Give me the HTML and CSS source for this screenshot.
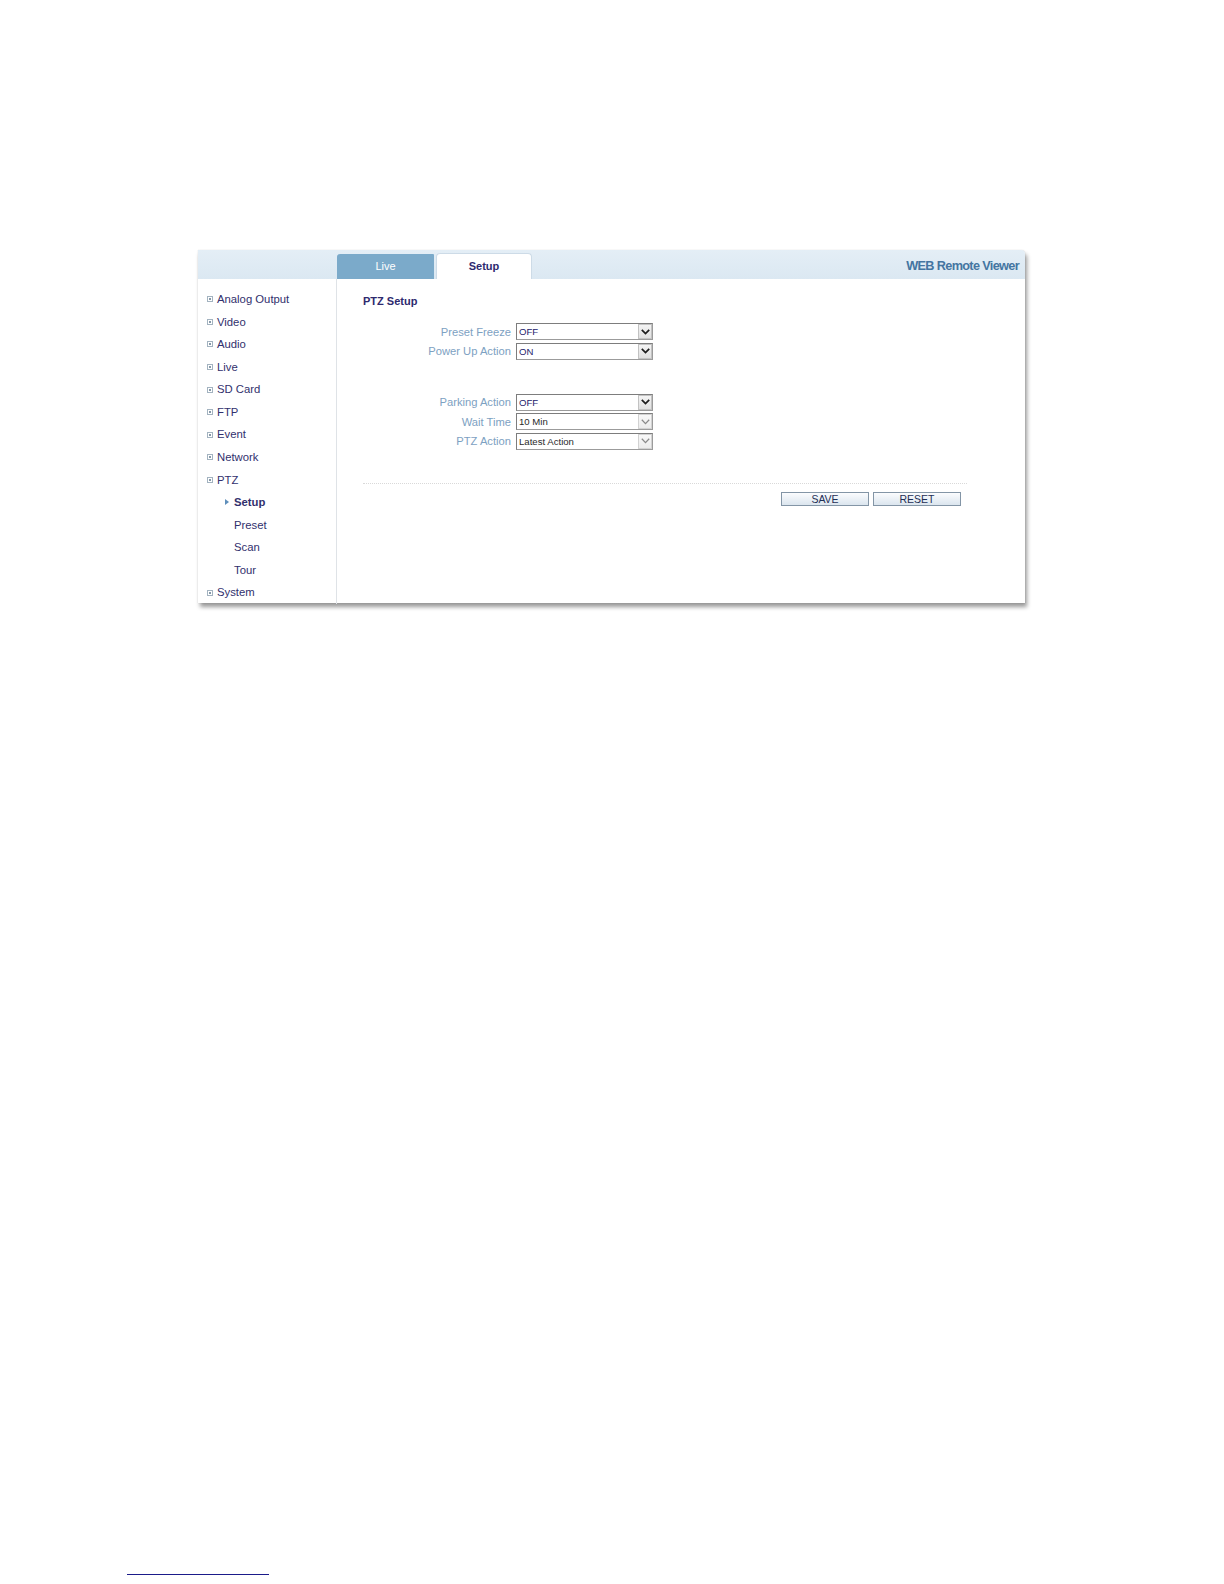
FILE: index.html
```html
<!DOCTYPE html>
<html lang="en">
<head>
<meta charset="utf-8">
<title>WEB Remote Viewer - PTZ Setup</title>
<link rel="stylesheet" href="styles.css">
</head>
<body>
<div class="page">
  <div class="frame">
    <div class="header">
      <div class="header-left"></div>
      <div class="tab tab-live">Live</div>
      <div class="tab tab-setup">Setup</div>
      <div class="brand">WEB Remote Viewer</div>
    </div>
    <div class="body">
      <ul class="sidebar">
        <li class="nav-item"><span class="box"></span>Analog Output</li>
        <li class="nav-item"><span class="box"></span>Video</li>
        <li class="nav-item"><span class="box"></span>Audio</li>
        <li class="nav-item"><span class="box"></span>Live</li>
        <li class="nav-item"><span class="box"></span>SD Card</li>
        <li class="nav-item"><span class="box"></span>FTP</li>
        <li class="nav-item"><span class="box"></span>Event</li>
        <li class="nav-item"><span class="box"></span>Network</li>
        <li class="nav-item"><span class="box"></span>PTZ</li>
        <li class="nav-sub active"><span class="tri"></span>Setup</li>
        <li class="nav-sub">Preset</li>
        <li class="nav-sub">Scan</li>
        <li class="nav-sub">Tour</li>
        <li class="nav-item"><span class="box"></span>System</li>
      </ul>
      <div class="content">
        <div class="title">PTZ Setup</div>
        <div class="form">
          <div class="group">
            <div class="row">
              <span class="label">Preset Freeze</span>
              <div class="select"><span class="value">OFF</span><span class="arrow"><svg width="9" height="6" viewBox="0 0 9 6"><path d="M0.8 0.8 L4.5 4.6 L8.2 0.8" fill="none" stroke="#1c1c1c" stroke-width="1.7"/></svg></span></div>
            </div>
            <div class="row">
              <span class="label">Power Up Action</span>
              <div class="select"><span class="value">ON</span><span class="arrow"><svg width="9" height="6" viewBox="0 0 9 6"><path d="M0.8 0.8 L4.5 4.6 L8.2 0.8" fill="none" stroke="#1c1c1c" stroke-width="1.7"/></svg></span></div>
            </div>
          </div>
          <div class="group group-2">
            <div class="row">
              <span class="label">Parking Action</span>
              <div class="select"><span class="value">OFF</span><span class="arrow"><svg width="9" height="6" viewBox="0 0 9 6"><path d="M0.8 0.8 L4.5 4.6 L8.2 0.8" fill="none" stroke="#1c1c1c" stroke-width="1.7"/></svg></span></div>
            </div>
            <div class="row">
              <span class="label">Wait Time</span>
              <div class="select disabled"><span class="value">10 Min</span><span class="arrow"><svg width="9" height="6" viewBox="0 0 9 6"><path d="M0.8 0.8 L4.5 4.6 L8.2 0.8" fill="none" stroke="#8a8a8a" stroke-width="1.3"/></svg></span></div>
            </div>
            <div class="row">
              <span class="label">PTZ Action</span>
              <div class="select disabled"><span class="value">Latest Action</span><span class="arrow"><svg width="9" height="6" viewBox="0 0 9 6"><path d="M0.8 0.8 L4.5 4.6 L8.2 0.8" fill="none" stroke="#8a8a8a" stroke-width="1.3"/></svg></span></div>
            </div>
          </div>
          <div class="divider"></div>
          <div class="buttons">
            <button class="btn">SAVE</button>
            <button class="btn">RESET</button>
          </div>
        </div>
      </div>
    </div>
  </div>
  <div class="foot-rule"></div>
</div>
</body>
</html>
```
FILE: styles.css
```css
html, body {
  margin: 0;
  padding: 0;
  background: #ffffff;
}

body {
  font-family: "Liberation Sans", Arial, sans-serif;
}

.page {
  display: flex;
  flex-direction: column;
  padding-top: 250px;
  padding-left: 198px;
}

.frame {
  width: 827px;
  height: 353px;
  display: flex;
  flex-direction: column;
  background: #ffffff;
  border-top-right-radius: 4px;
  box-shadow: 0 0 1px rgba(0, 0, 0, 0.25), 2px 4px 4px rgba(0, 0, 0, 0.4);
}

.header {
  height: 29px;
  flex: none;
  display: flex;
  align-items: flex-end;
  background: linear-gradient(#e4eef6, #dbe8f2);
  border-top-right-radius: 4px;
}

.header-left {
  width: 139px;
}

.tab {
  height: 25px;
  line-height: 25px;
  text-align: center;
  font-size: 11px;
  box-sizing: border-box;
}

.tab-live {
  width: 97px;
  background: #7baaca;
  color: #ffffff;
  border-top-left-radius: 3px;
  border-top-right-radius: 1px;
}

.tab-setup {
  width: 96px;
  height: 26px;
  line-height: 25px;
  margin-left: 2px;
  background: #ffffff;
  color: #2e2a6e;
  font-weight: bold;
  border: 1px solid #cddbe7;
  border-bottom: none;
  border-top-left-radius: 4px;
  border-top-right-radius: 4px;
}

.brand {
  margin-left: auto;
  padding-right: 6px;
  padding-bottom: 6px;
  font-size: 12.7px;
  font-weight: bold;
  letter-spacing: -0.65px;
  color: #4475a1;
}

.body {
  flex: 1;
  display: flex;
}

.sidebar {
  list-style: none;
  margin: 0;
  padding: 9px 0 0 0;
  width: 138px;
  border-right: 1px solid #dfe3e7;
  flex: none;
}

.nav-item,
.nav-sub {
  height: 22.57px;
  line-height: 22.57px;
  font-size: 11.3px;
  color: #31306d;
  display: flex;
  align-items: center;
  white-space: nowrap;
}

.nav-item {
  padding-left: 9px;
}

.box {
  width: 4px;
  height: 4px;
  border: 1px solid #a3b3c0;
  margin-right: 4px;
  display: flex;
  align-items: center;
  justify-content: center;
}

.box::after {
  content: "";
  width: 2px;
  height: 2px;
  background: #8699a8;
}

.nav-sub {
  padding-left: 36px;
}

.nav-sub.active {
  padding-left: 27px;
  font-weight: bold;
}

.tri {
  width: 0;
  height: 0;
  border-top: 3px solid transparent;
  border-bottom: 3px solid transparent;
  border-left: 4px solid #5f8fbb;
  margin-right: 5px;
}

.content {
  flex: 1;
  padding-left: 26px;
}

.title {
  margin-top: 15px;
  height: 14px;
  line-height: 14px;
  font-size: 11px;
  font-weight: bold;
  color: #2e2a6e;
}

.form {
  width: 604px;
  margin-top: 15px;
}

.group {
  display: flex;
  flex-direction: column;
  gap: 2.5px;
}

.group-2 {
  margin-top: 34px;
}

.row {
  display: flex;
  align-items: center;
  height: 17px;
}

.label {
  width: 148px;
  text-align: right;
  font-size: 11.2px;
  color: #7da1c2;
  margin-right: 5px;
  white-space: nowrap;
}

.select {
  width: 137px;
  height: 17px;
  box-sizing: border-box;
  border: 1px solid #9b9b9b;
  border-top-color: #7d7d7d;
  border-left-color: #7d7d7d;
  display: flex;
  align-items: center;
  background: #ffffff;
}

.value {
  flex: 1;
  padding-left: 2px;
  font-size: 9.6px;
  color: #1d1b6b;
}

.select.disabled .value {
  color: #2a2a2a;
}

.arrow {
  width: 14px;
  height: 15px;
  box-sizing: border-box;
  border: 1px solid #c2c2c2;
  background: linear-gradient(#f4f4f4, #e0e0e0);
  display: flex;
  align-items: center;
  justify-content: center;
}

.select.disabled .arrow {
  border-color: #d2d2d2;
  background: linear-gradient(#f8f8f8, #ececec);
}

.divider {
  margin-top: 33px;
  border-top: 1px dotted #d9d9d9;
}

.buttons {
  display: flex;
  justify-content: flex-end;
  gap: 4px;
  margin-top: 8px;
  padding-right: 6px;
}

.btn {
  width: 88px;
  height: 14px;
  padding: 0;
  margin: 0;
  box-sizing: border-box;
  border: 1px solid #8395a6;
  background: linear-gradient(#fbfcfe, #dbe5ee);
  font-family: "Liberation Sans", Arial, sans-serif;
  font-size: 10.5px;
  line-height: 12px;
  color: #1f2f55;
}

.foot-rule {
  margin-top: 971px;
  margin-left: -71px;
  width: 142px;
  height: 0;
  border-top: 1px solid #1b1b8a;
}
```
